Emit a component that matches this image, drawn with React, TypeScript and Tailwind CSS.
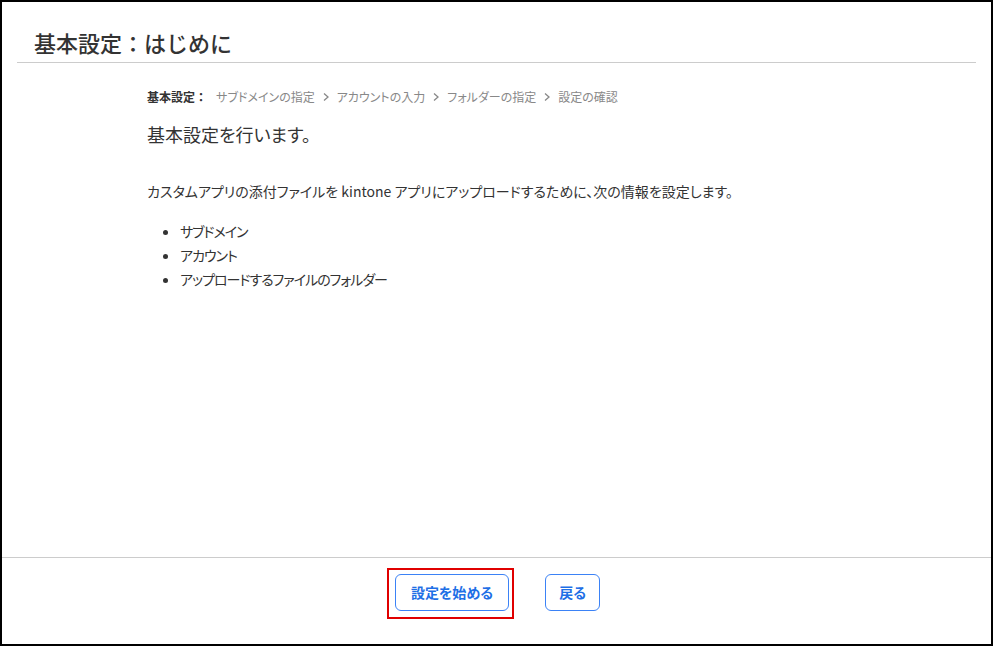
const jp = "font-['Noto_Sans_CJK_JP','Noto_Sans',sans-serif]";

function Crumb({ label }: { label: string }) {
  return (
    <>
      <svg className="mx-[6px] h-[10px] w-[10px] text-[#888]" viewBox="0 0 10 10" fill="none" stroke="currentColor" strokeWidth="1.3">
        <path d="M3 1.5 L7 5 L3 8.5" />
      </svg>
      <span>{label}</span>
    </>
  );
}

export default function App() {
  return (
    <div className={`${jp} flex h-[646px] w-[993px] flex-col border-2 border-black bg-white text-[#333]`}>
      {/* ヘッダー */}
      <div className="mx-[15px] border-b border-[#cccccc] pb-[4px] pl-[17px] pt-[24px]">
        <h1 className="text-[22px] font-medium leading-[32px] text-[#333]">基本設定：はじめに</h1>
      </div>

      {/* 本文 */}
      <div className="flex-1 pl-[145px] pt-[25px] [font-feature-settings:'palt']">
        <div className="flex items-center text-[12px] leading-[18px] text-[#888]">
          <span className="font-bold text-[#333]">
            基本設定<span className="[font-feature-settings:normal]">：</span>
          </span>
          <span className="ml-[9px]">サブドメインの指定</span>
          <Crumb label="アカウントの入力" />
          <Crumb label="フォルダーの指定" />
          <Crumb label="設定の確認" />
        </div>
        <h2 className="mt-[14px] text-[18px] leading-[28px]">基本設定を行います。</h2>
        <p className="mt-[31px] text-[14px] leading-[24px]">
          カスタムアプリの添付ファイルを kintone アプリにアップロードするために、次の情報を設定します。
        </p>
        <ul className="mt-[16px] list-disc pl-[33px] text-[14px] leading-[24px] tracking-[-1px]">
          <li>サブドメイン</li>
          <li>アカウント</li>
          <li>アップロードするファイルのフォルダー</li>
        </ul>
      </div>

      {/* フッター */}
      <div className="flex h-[87px] justify-center gap-[36px] border-t border-[#cccccc] pt-[16px] [font-feature-settings:'palt']">
        <div className="relative ml-[2px] h-[37px]">
          <button className="h-[37px] rounded-md border border-[#3b82f6] px-[15px] text-[14px] font-bold text-[#1e6fe6]">
            設定を始める
          </button>
          <div className="pointer-events-none absolute -bottom-[8px] -left-[8px] -right-[5px] -top-[6px] border-2 border-[#e00000]" />
        </div>
        <button className="h-[37px] rounded-md border border-[#3b82f6] px-[13px] text-[14px] font-bold text-[#1e6fe6]">
          戻る
        </button>
      </div>
    </div>
  );
}
